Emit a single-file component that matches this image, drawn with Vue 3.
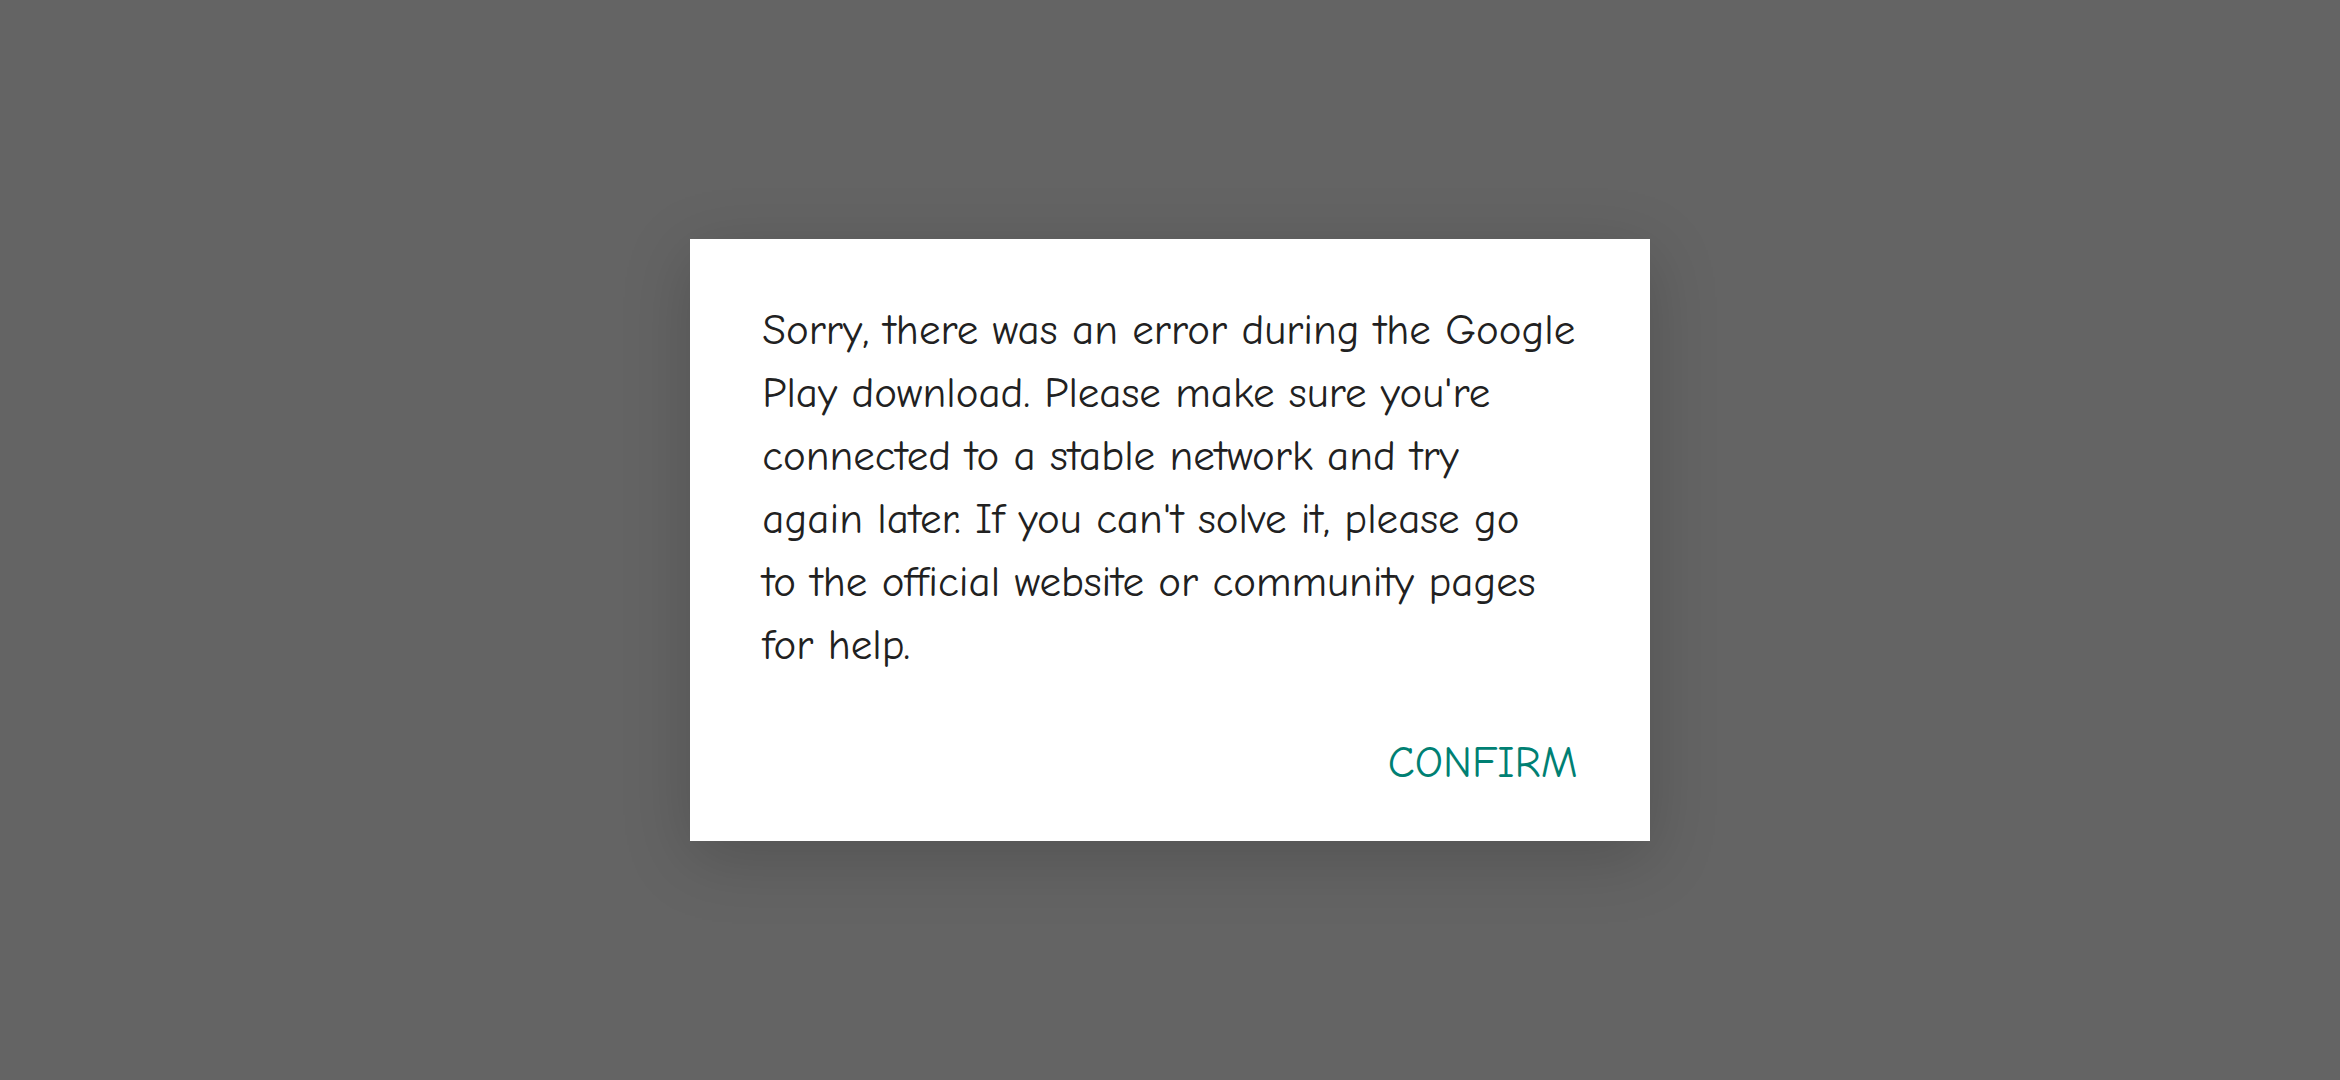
<script setup>
const lines = [
  'Sorry, there was an error during the Google',
  "Play download. Please make sure you're",
  'connected to a stable network and try',
  "again later. If you can't solve it, please go",
  'to the official website or community pages',
  'for help.'
]
const message = lines.join('\n')
</script>

<template>
  <main class="backdrop">
    <section class="dialog" role="alertdialog" aria-describedby="message">
      <p id="message" class="message">{{ message }}</p>
      <div class="actions">
        <button type="button" class="confirm">CONFIRM</button>
      </div>
    </section>
  </main>
</template>

<style>
body {
  margin: 0;
  background: #646464;
}
</style>

<style scoped>
.backdrop {
  min-height: 100vh;
  display: flex;
  align-items: center;
  justify-content: center;
}
.dialog {
  box-sizing: border-box;
  width: 41%;
  padding: 60px 72px 40px;
  background: #fff;
  box-shadow: 0 16px 64px rgba(0, 0, 0, 0.18);
  font-family: "Comic Neue", "Open Sans", Lato, sans-serif;
}
.message {
  margin: 0;
  color: #212121;
  font-size: 43px;
  line-height: 63px;
  white-space: pre-line;
}
.actions {
  display: flex;
  justify-content: flex-end;
  padding-top: 48px;
}
.confirm {
  padding: 0;
  border: 0;
  background: none;
  color: #008073;
  font: inherit;
  font-size: 44px;
  line-height: 76px;
}
</style>
